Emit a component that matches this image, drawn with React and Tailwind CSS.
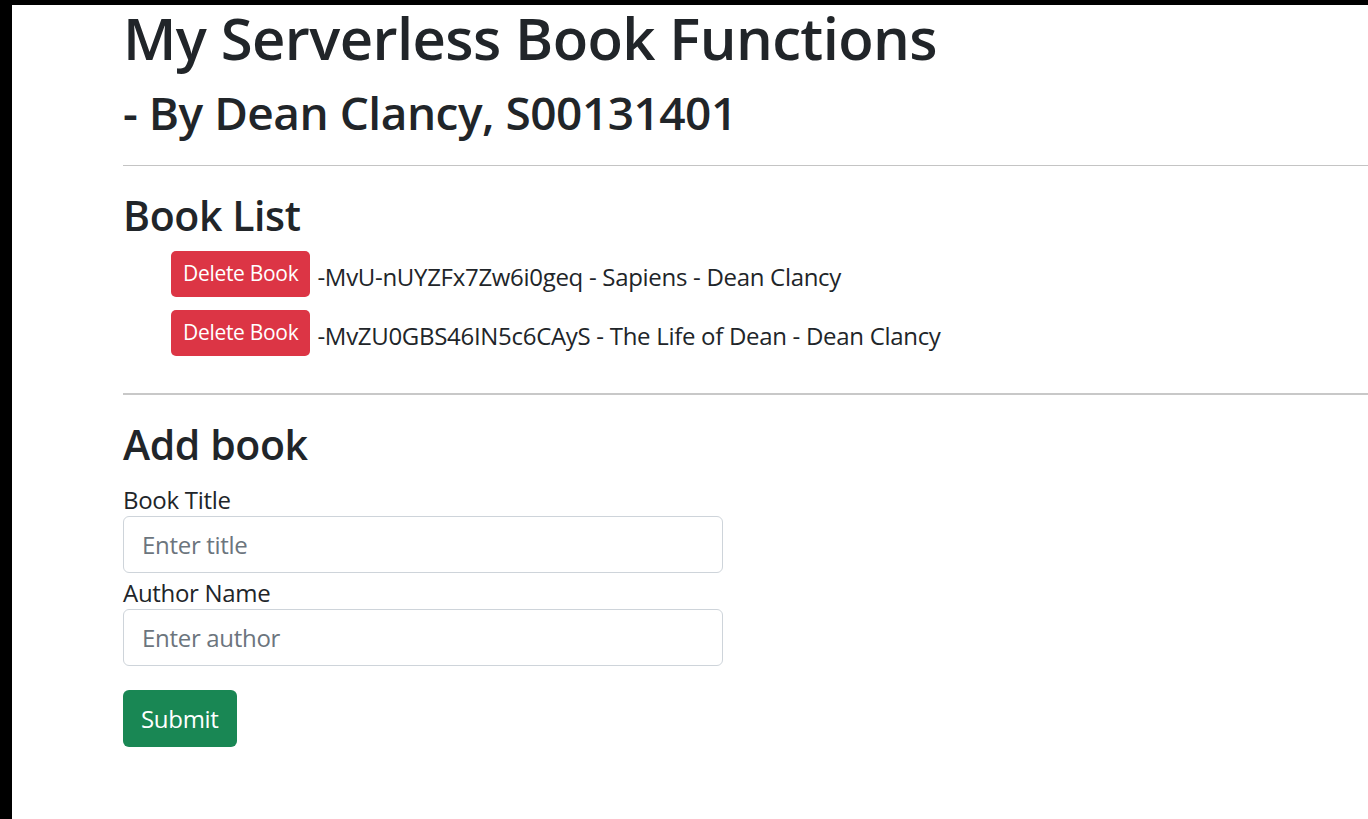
import React, { useState } from 'react';

const initialBooks = [
  { id: '-MvU-nUYZFx7Zw6i0geq', title: 'Sapiens', author: 'Dean Clancy' },
  { id: '-MvZU0GBS46IN5c6CAyS', title: 'The Life of Dean', author: 'Dean Clancy' },
];

const App = () => {
  const [books, setBooks] = useState(initialBooks);
  const [title, setTitle] = useState('');
  const [author, setAuthor] = useState('');

  const deleteBook = (id) => {
    setBooks(items => items.filter(book => book.id !== id));
  };

  const submit = (e) => {
    e.preventDefault();
    if (!title || !author) return;
    setBooks(items => [...items, { id: '-' + Math.random().toString(36).slice(2, 21), title, author }]);
    setTitle('');
    setAuthor('');
  };

  return (
    <div className="min-h-screen bg-black pl-[12px] pt-[5px]" style={{ fontFamily: '"Open Sans", "Noto Sans", sans-serif' }}>
      <div className="min-h-[814px] bg-white pl-[111px] text-[#212529] tracking-[-0.3px]">
        <h1 className="text-[58px] font-semibold leading-[66px] tracking-[-0.6px]">My Serverless Book Functions</h1>
        <h2 className="text-[46px] font-semibold leading-[58px] mt-[12px] tracking-[-0.5px]">- By Dean Clancy, S00131401</h2>

        <hr className="mt-[24px] border-t border-[#c4c4c4]" />

        <h3 className="mt-[24px] text-[41px] font-semibold leading-[50px] tracking-[-0.4px]">Book List</h3>
        <ul className="pl-[48px] mt-[4px]">
          {books.map(book => (
            <li key={book.id} className="flex items-center h-[59px] text-[24px]">
              <button
                onClick={() => deleteBook(book.id)}
                className="h-[46px] px-[12px] rounded-[5px] bg-[#dc3545] text-white text-[21px] mr-[7px]"
              >
                Delete Book
              </button>
              <span className="mt-[6px]">{book.id} - {book.title} - {book.author}</span>
            </li>
          ))}
        </ul>

        <hr className="mt-[31px] border-t-2 border-[#c8c8c8]" />

        <h3 className="mt-[24px] text-[41px] font-semibold leading-[50px] tracking-[-0.4px]">Add book</h3>
        <form onSubmit={submit} className="mt-[11px] text-[24px]">
          <label className="block pt-[4px] leading-[32px]">Book Title</label>
          <input
            value={title}
            onChange={e => setTitle(e.target.value)}
            placeholder="Enter title"
            className="block w-[600px] h-[57px] px-[18px] border border-[#ced4da] rounded-[6px] placeholder:text-[#6c757d] outline-none"
          />
          <label className="block pt-[4px] leading-[32px]">Author Name</label>
          <input
            value={author}
            onChange={e => setAuthor(e.target.value)}
            placeholder="Enter author"
            className="block w-[600px] h-[57px] px-[18px] border border-[#ced4da] rounded-[6px] placeholder:text-[#6c757d] outline-none"
          />
          <button type="submit" className="mt-[24px] h-[57px] px-[18px] rounded-[6px] bg-[#198754] text-white">
            Submit
          </button>
        </form>
      </div>
    </div>
  );
};

export default App;
